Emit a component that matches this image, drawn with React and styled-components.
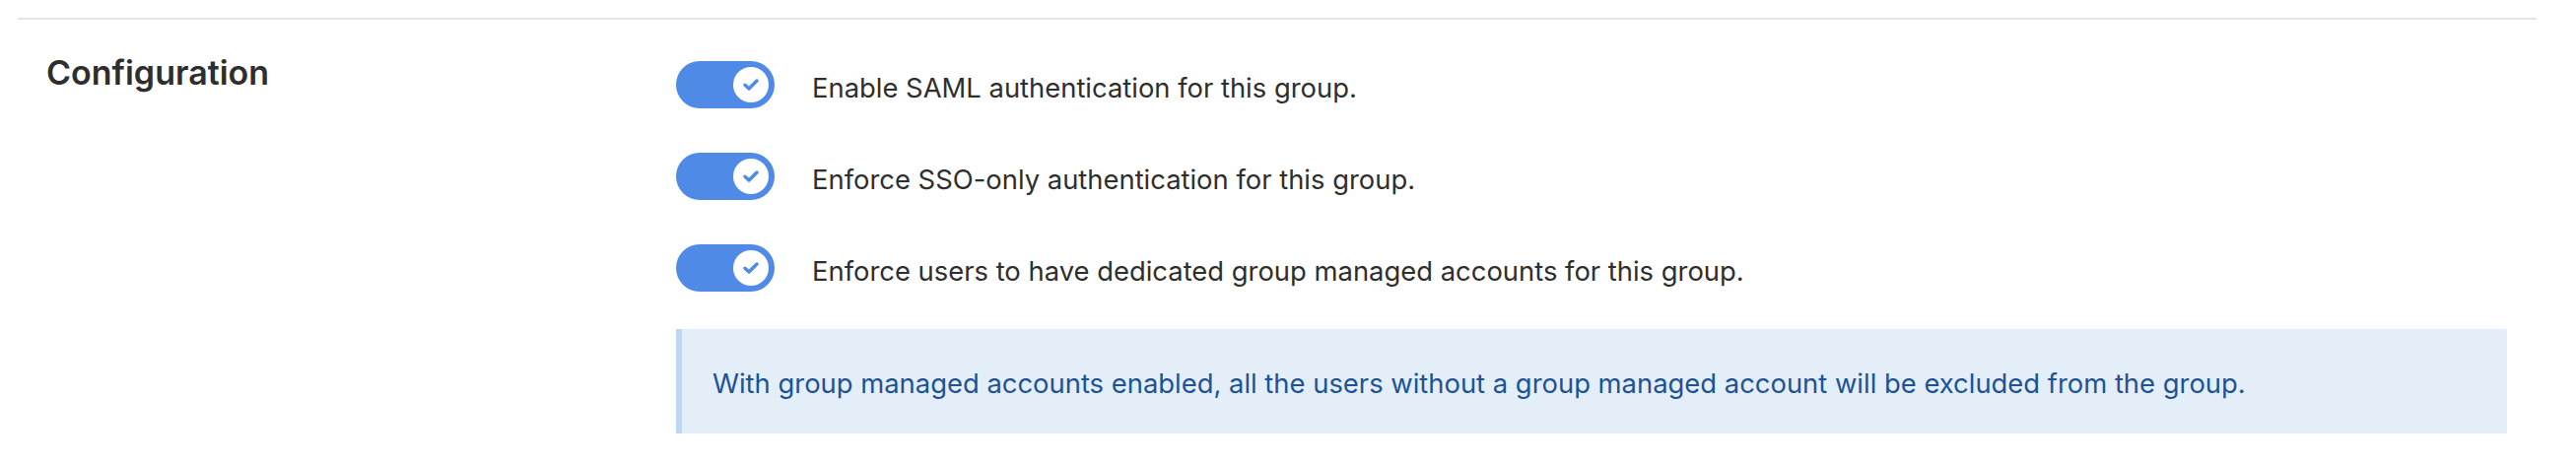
import React from "react";
import styled, { createGlobalStyle } from "styled-components";

const GlobalStyle = createGlobalStyle`
  body {
    margin: 0;
    background: #ffffff;
    font-family: Inter, "Noto Sans", "Liberation Sans", sans-serif;
    color: #2e2e2e;
  }
`;

const Section = styled.section`
  margin: 18px 40px 0 18px;
  border-top: 2px solid #e5e5e5;
  display: grid;
  grid-template-columns: 668px 1fr;
  padding: 0 30px 0 0;
`;

const Aside = styled.div`
  padding: 34px 0 0 29px;
`;

const Title = styled.h4`
  margin: 0;
  font-size: 34px;
  font-weight: 600;
  line-height: 40px;
  color: #2e2e2e;
`;

const Content = styled.div`
  padding-top: 42px;
  display: flex;
  flex-direction: column;
`;

const Options = styled.div`
  display: flex;
  flex-direction: column;
  gap: 45px;
`;

const Row = styled.label`
  display: flex;
  align-items: center;
  gap: 38px;
  height: 48px;
`;

const Toggle = styled.span`
  flex: none;
  display: flex;
  align-items: center;
  justify-content: ${(p) => (p.checked ? "flex-end" : "flex-start")};
  width: 100px;
  height: 48px;
  padding: 0 6px;
  box-sizing: border-box;
  border-radius: 24px;
  background: ${(p) => (p.checked ? "#4f8ae6" : "#cccccc")};
`;

const Knob = styled.span`
  display: flex;
  align-items: center;
  justify-content: center;
  width: 36px;
  height: 36px;
  border-radius: 50%;
  background: #ffffff;
`;

const Label = styled.span`
  font-size: 27.4px;
  line-height: 34px;
  color: #2e2e2e;
  padding-top: 6px;
`;

const Alert = styled.div`
  margin-top: 38px;
  height: 106px;
  box-sizing: border-box;
  display: flex;
  align-items: center;
  padding: 4px 0 0 31px;
  background: #e4eef9;
  border-left: 6px solid #bcd6f4;
  font-size: 27.4px;
  color: #1d5394;
`;

const Check = () => (
  <svg width="16" height="12" viewBox="0 0 16 12" fill="none">
    <path
      d="M2 6.2 L6 10 L14 2"
      stroke="#4f8ae6"
      strokeWidth="3.4"
      strokeLinecap="round"
      strokeLinejoin="round"
    />
  </svg>
);

const options = [
  "Enable SAML authentication for this group.",
  "Enforce SSO-only authentication for this group.",
  "Enforce users to have dedicated group managed accounts for this group.",
];

const App = () => (
  <>
    <GlobalStyle />
    <Section>
      <Aside>
        <Title>Configuration</Title>
      </Aside>
      <Content>
        <Options>
          {options.map((text) => (
            <Row key={text}>
              <Toggle checked>
                <Knob>
                  <Check />
                </Knob>
              </Toggle>
              <Label>{text}</Label>
            </Row>
          ))}
        </Options>
        <Alert>
          With group managed accounts enabled, all the users without a group managed account will be excluded from the group.
        </Alert>
      </Content>
    </Section>
  </>
);

export default App;
